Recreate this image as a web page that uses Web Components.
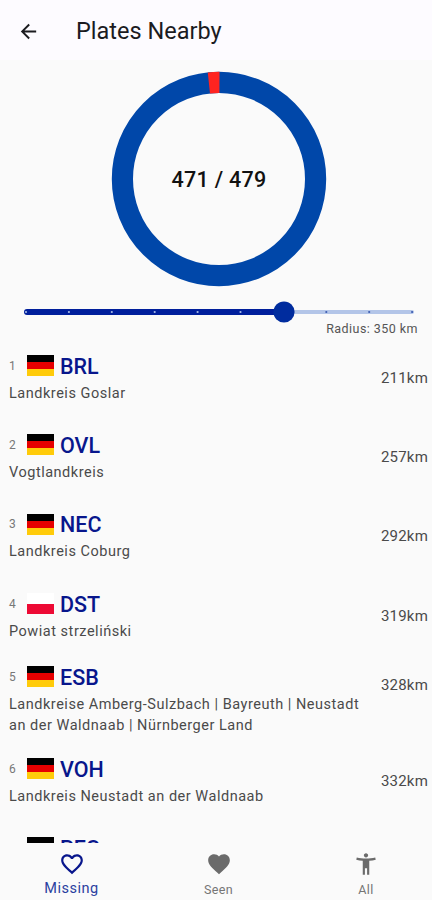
<!DOCTYPE html>
<html lang="en">
<head>
<meta charset="utf-8">
<meta name="viewport" content="width=device-width, initial-scale=1">
<title>Plates Nearby</title>
<style>
  html, body { margin: 0; height: 100%; background: #fafafa; }
  body { font-family: Roboto, "Liberation Sans", sans-serif; overflow: hidden; }
</style>
</head>
<body>
<plates-page></plates-page>

<script>
// Attaches an open shadow root with the given markup
function render(el, html) {
  el.attachShadow({ mode: 'open' }).innerHTML = html;
}

class AppBar extends HTMLElement {
  connectedCallback() {
    render(this, `
      <style>
        :host { display: flex; align-items: center; flex: none; height: 60px; padding-left: 17px; background: #fdfbff; color: #1b1b1f; }
        svg { width: 23px; height: 23px; margin-top: 2px; }
        h1 { margin: 0 0 0 36px; padding-top: 1px; font-size: 23.5px; font-weight: 400; line-height: 30px; }
      </style>
      <svg viewBox="0 0 24 24" fill="currentColor"><path d="M20 11H7.83l5.59-5.59L12 4l-8 8 8 8 1.41-1.41L7.83 13H20z"/></svg>
      <h1><slot></slot></h1>
    `);
  }
}

class ProgressRing extends HTMLElement {
  connectedCallback() {
    const value = Number(this.getAttribute('value'));
    const max = Number(this.getAttribute('max'));
    const rest = 100 - (value / max) * 100;
    render(this, `
      <style>
        :host { display: grid; place-items: center; flex: none; width: 216px; height: 216px; margin: 11px 0 0 111px; }
        svg, span { grid-area: 1 / 1; }
        span { font-size: 21.5px; font-weight: 500; letter-spacing: 0.3px; color: #111; }
      </style>
      <svg width="216" height="216" viewBox="0 0 216 216" fill="none" stroke-width="21.2">
        <circle cx="108" cy="108" r="96.6" stroke="#0047a9"/>
        <circle cx="108" cy="108" r="96.6" stroke="#ff2420" pathLength="100"
          stroke-dasharray="${rest + 0.1} 100" transform="rotate(${-90 - rest * 3.6})"
          transform-origin="108 108"/>
      </svg>
      <span>${value} / ${max}</span>
    `);
  }
}

class RadiusSlider extends HTMLElement {
  connectedCallback() {
    const step = 42.9;
    const current = 6;
    let ticks = '';
    for (let i = 0; i < 10; i++) {
      ticks += `<circle cx="${26 + i * step}" cy="12" r="1.1" fill="${i < current ? '#a9bde6' : '#3c5cb0'}"/>`;
    }
    render(this, `
      <style>
        :host { display: flex; flex-direction: column; flex: none; margin-top: 14px; }
        svg { display: block; }
        span { align-self: flex-end; margin: -2px 14px 1px 0; font-size: 12.5px; line-height: 16px; letter-spacing: 0.45px; color: #555; }
      </style>
      <svg width="432" height="22" viewBox="0 1 432 22">
        <rect x="280" y="10" width="134" height="4" rx="2" fill="#b3c5e8"/>
        <rect x="24" y="9" width="260" height="6" rx="3" fill="#001f9c"/>
        ${ticks}
        <circle cx="284" cy="12" r="10.6" fill="#002c9e"/>
      </svg>
      <span><slot></slot></span>
    `);
  }
}

class CountryFlag extends HTMLElement {
  connectedCallback() {
    const bands = {
      de: ['#000', '#e60000', '#ffcb0a'],
      pl: ['#fff', '#ed0a34'],
    }[this.getAttribute('country')];
    render(this, `
      <style>
        :host { display: flex; flex-direction: column; width: 27px; height: 21px; margin-top: -1px; }
        i { flex: 1; }
      </style>
      ${bands.map((c) => `<i style="background:${c}"></i>`).join('')}
    `);
  }
}

class PlateRow extends HTMLElement {
  connectedCallback() {
    const get = (name) => this.getAttribute(name);
    const distance = get('distance');
    render(this, `
      <style>
        :host { display: flex; flex: none; box-sizing: border-box; height: 79.3px; padding: 10px 4px 0 9px; }
        :host([tall]) { height: 85.7px; padding-top: 3.7px; }
        .info { flex: 1; }
        .head { display: flex; align-items: center; height: 27px; }
        .num { width: 18px; margin-top: -1px; font-size: 12px; color: #777; }
        .code { margin-left: 6px; font-size: 21.5px; font-weight: 500; line-height: 27px; color: #08168c; }
        .name { margin-top: 3px; font-size: 14.5px; line-height: 21.3px; letter-spacing: 0.52px; color: #4a4a4a; white-space: nowrap; }
        .dist { margin-top: 15px; font-size: 15px; line-height: 21px; letter-spacing: 0.2px; color: #4a4a4a; }
        :host([tall]) .dist { margin-top: 11px; }
      </style>
      <div class="info">
        <div class="head">
          <span class="num">${get('num') || ''}</span>
          <country-flag country="${get('country')}"></country-flag>
          <span class="code">${get('code')}</span>
        </div>
        <div class="name"><slot></slot></div>
      </div>
      ${distance ? `<span class="dist">${distance}km</span>` : ''}
    `);
  }
}

class NavItem extends HTMLElement {
  connectedCallback() {
    render(this, `
      <style>
        :host { display: flex; flex: 1; flex-direction: column; align-items: center; color: #757575; }
        svg { width: 26px; height: 26px; margin-top: 7.5px; fill: #6b6b6b; }
        span { margin-top: 5px; font-size: 12.5px; line-height: 16px; letter-spacing: 0.4px; }
        :host([active]) { color: #2a3fa0; }
        :host([active]) svg { fill: #08168c; }
        :host([active]) span { margin-top: 4px; font-size: 14.5px; letter-spacing: 0.5px; }
      </style>
      <svg viewBox="0 0 24 24"><path d="${this.getAttribute('icon')}"/></svg>
      <span><slot></slot></span>
    `);
  }
}

class PlatesPage extends HTMLElement {
  connectedCallback() {
    render(this, `
      <style>
        :host { display: flex; flex-direction: column; width: 432px; height: 900px; background: #fafafa; }
        main { display: flex; flex: 1; flex-direction: column; min-height: 0; overflow: hidden; }
        .list { display: flex; flex-direction: column; margin-top: 4.7px; }
        nav { display: flex; flex: none; height: 57px; background: #fafafa; }
        nav-item:first-child { flex: 0 0 143px; }
        nav-item:nth-child(2) { flex: 0 0 151px; }
        nav-item:last-child { flex: 0 0 144px; }
      </style>
      <app-bar>Plates Nearby</app-bar>
      <main>
        <progress-ring value="471" max="479"></progress-ring>
        <radius-slider>Radius: 350 km</radius-slider>
        <div class="list">
          <plate-row num="1" country="de" code="BRL" distance="211">Landkreis Goslar</plate-row>
          <plate-row num="2" country="de" code="OVL" distance="257">Vogtlandkreis</plate-row>
          <plate-row num="3" country="de" code="NEC" distance="292">Landkreis Coburg</plate-row>
          <plate-row num="4" country="pl" code="DST" distance="319">Powiat strzeliński</plate-row>
          <plate-row tall num="5" country="de" code="ESB" distance="328">Landkreise Amberg-Sulzbach | Bayreuth | Neustadt<br>an der Waldnaab | Nürnberger Land</plate-row>
          <plate-row num="6" country="de" code="VOH" distance="332">Landkreis Neustadt an der Waldnaab</plate-row>
          <plate-row country="de" code="PEG"></plate-row>
        </div>
      </main>
      <nav>
        <nav-item active icon="M16.5 3c-1.74 0-3.41.81-4.5 2.09C10.91 3.81 9.24 3 7.5 3 4.42 3 2 5.42 2 8.5c0 3.78 3.4 6.86 8.55 11.54L12 21.35l1.45-1.32C18.6 15.36 22 12.28 22 8.5 22 5.42 19.58 3 16.5 3zm-4.4 15.55l-.1.1-.1-.1C7.14 14.24 4 11.39 4 8.5 4 6.5 5.5 5 7.5 5c1.54 0 3.04.99 3.57 2.36h1.87C13.46 5.99 14.96 5 16.5 5c2 0 3.5 1.5 3.5 3.5 0 2.89-3.14 5.74-7.9 10.05z">Missing</nav-item>
        <nav-item icon="M12 21.35l-1.45-1.32C5.4 15.36 2 12.28 2 8.5 2 5.42 4.42 3 7.5 3c1.74 0 3.41.81 4.5 2.09C13.09 3.81 14.76 3 16.5 3 19.58 3 22 5.42 22 8.5c0 3.78-3.4 6.86-8.55 11.54L12 21.35z">Seen</nav-item>
        <nav-item icon="M20.5 6c-2.61.7-5.67 1-8.5 1s-5.89-.3-8.5-1L3 8c1.86.5 4 .83 6 1v13h2v-6h2v6h2V9c2-.17 4.14-.5 6-1l-.5-2zM12 6c1.1 0 2-.9 2-2s-.9-2-2-2-2 .9-2 2 .9 2 2 2z">All</nav-item>
      </nav>
    `);
  }
}

customElements.define('app-bar', AppBar);
customElements.define('progress-ring', ProgressRing);
customElements.define('radius-slider', RadiusSlider);
customElements.define('country-flag', CountryFlag);
customElements.define('plate-row', PlateRow);
customElements.define('nav-item', NavItem);
customElements.define('plates-page', PlatesPage);
</script>
</body>
</html>
